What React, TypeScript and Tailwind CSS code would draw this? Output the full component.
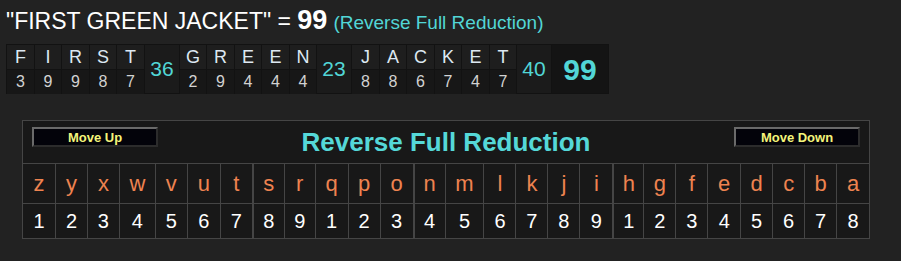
import React from 'react';

type Word = { letters: string[]; values: number[]; sum: number };

const PHRASE: Word[] = [
  { letters: ['F', 'I', 'R', 'S', 'T'], values: [3, 9, 9, 8, 7], sum: 36 },
  { letters: ['G', 'R', 'E', 'E', 'N'], values: [2, 9, 4, 4, 4], sum: 23 },
  { letters: ['J', 'A', 'C', 'K', 'E', 'T'], values: [8, 8, 6, 7, 4, 7], sum: 40 },
];

const CHART = 'zyxwvutsrqponmlkjihgfedcba'.split('');
// column widths of the cipher chart, in px
const WIDTHS = [32, 32, 32, 36, 32, 33, 32, 32, 31, 33, 32, 33, 32, 39, 32, 32, 32, 33, 31, 32, 32, 33, 32, 32, 32, 33];
const HEAVY = [7, 12, 18];

const ARIAL = { fontFamily: '"Liberation Sans", Arial, sans-serif' };

const CipherButton: React.FC<{ label: string }> = ({ label }) => (
  <button className="w-[126px] h-[20px] bg-[#03030a] border-2 border-t-[#6a6a6a] border-l-[#6a6a6a] border-b-[#2c2c2c] border-r-[#2c2c2c] text-[13px] font-bold text-[#f4f47a] leading-none">
    {label}
  </button>
);

const WordBreakdown: React.FC = () => (
  <div className="flex ml-[6px] mt-[5px] w-fit bg-[#121212] p-[1px] gap-[1px] h-[50px]">
    {PHRASE.map((w, wi) => (
      <React.Fragment key={wi}>
        {w.letters.map((l, i) => (
          <div key={i} className={`flex flex-col gap-[1px] ${(i + wi) % 2 === 0 ? 'w-[27px]' : 'w-[26px]'}`}>
            <div className="h-[24px] bg-[#1e1e1e] flex items-center justify-center text-[18px] text-[#dde8f2]">{l}</div>
            <div className="flex-1 bg-[#171717] flex items-center justify-center text-[16px] text-[#d2d2d2]">{w.values[i]}</div>
          </div>
        ))}
        <div className="w-[34px] bg-[#1b1b1b] flex items-center justify-center text-[21px] text-[#52d6d6]">{w.sum}</div>
      </React.Fragment>
    ))}
    <div className="w-[56px] bg-[#141414] flex items-center justify-center text-[30px] font-bold text-[#52d6d6]">99</div>
  </div>
);

const ReductionChart: React.FC = () => (
  <div className="ml-[22px] mt-[26px] w-[848px] border border-[#454545] bg-[#181818]">
    <div className="h-[42px] flex items-start justify-between px-[9px] pt-[6px] relative">
      <CipherButton label="Move Up" />
      <div className="absolute inset-x-0 top-[6px] text-center text-[26px] leading-[30px] font-bold text-[#55d8d8]">
        Reverse Full Reduction
      </div>
      <CipherButton label="Move Down" />
    </div>
    <div className="flex border-t border-[#454545]">
      {CHART.map((c, i) => (
        <div
          key={c}
          style={{ width: WIDTHS[i] }}
          className={`flex flex-col ${i === 0 ? '' : HEAVY.includes(i) ? 'border-l-2' : 'border-l'} border-[#454545]`}
        >
          <div className="h-[39px] flex items-center justify-center text-[22px] text-[#ee8350]">{c}</div>
          <div className="h-[35px] border-t border-[#454545] flex items-center justify-center text-[20px] text-white">
            {(i % 9) + 1}
          </div>
        </div>
      ))}
    </div>
  </div>
);

export default function App() {
  return (
    <div className="w-[901px] h-[261px] bg-[#222222] overflow-hidden" style={ARIAL}>
      <div className="pl-[6px] pt-[4px] flex items-baseline text-white leading-[32px]">
        <span className="text-[23px]">"FIRST GREEN JACKET" =&nbsp;</span>
        <span className="text-[27px] font-bold">99</span>
        <span className="text-[19px] text-[#52d6d6] ml-[6px]">(Reverse Full Reduction)</span>
      </div>
      <WordBreakdown />
      <ReductionChart />
    </div>
  );
}
